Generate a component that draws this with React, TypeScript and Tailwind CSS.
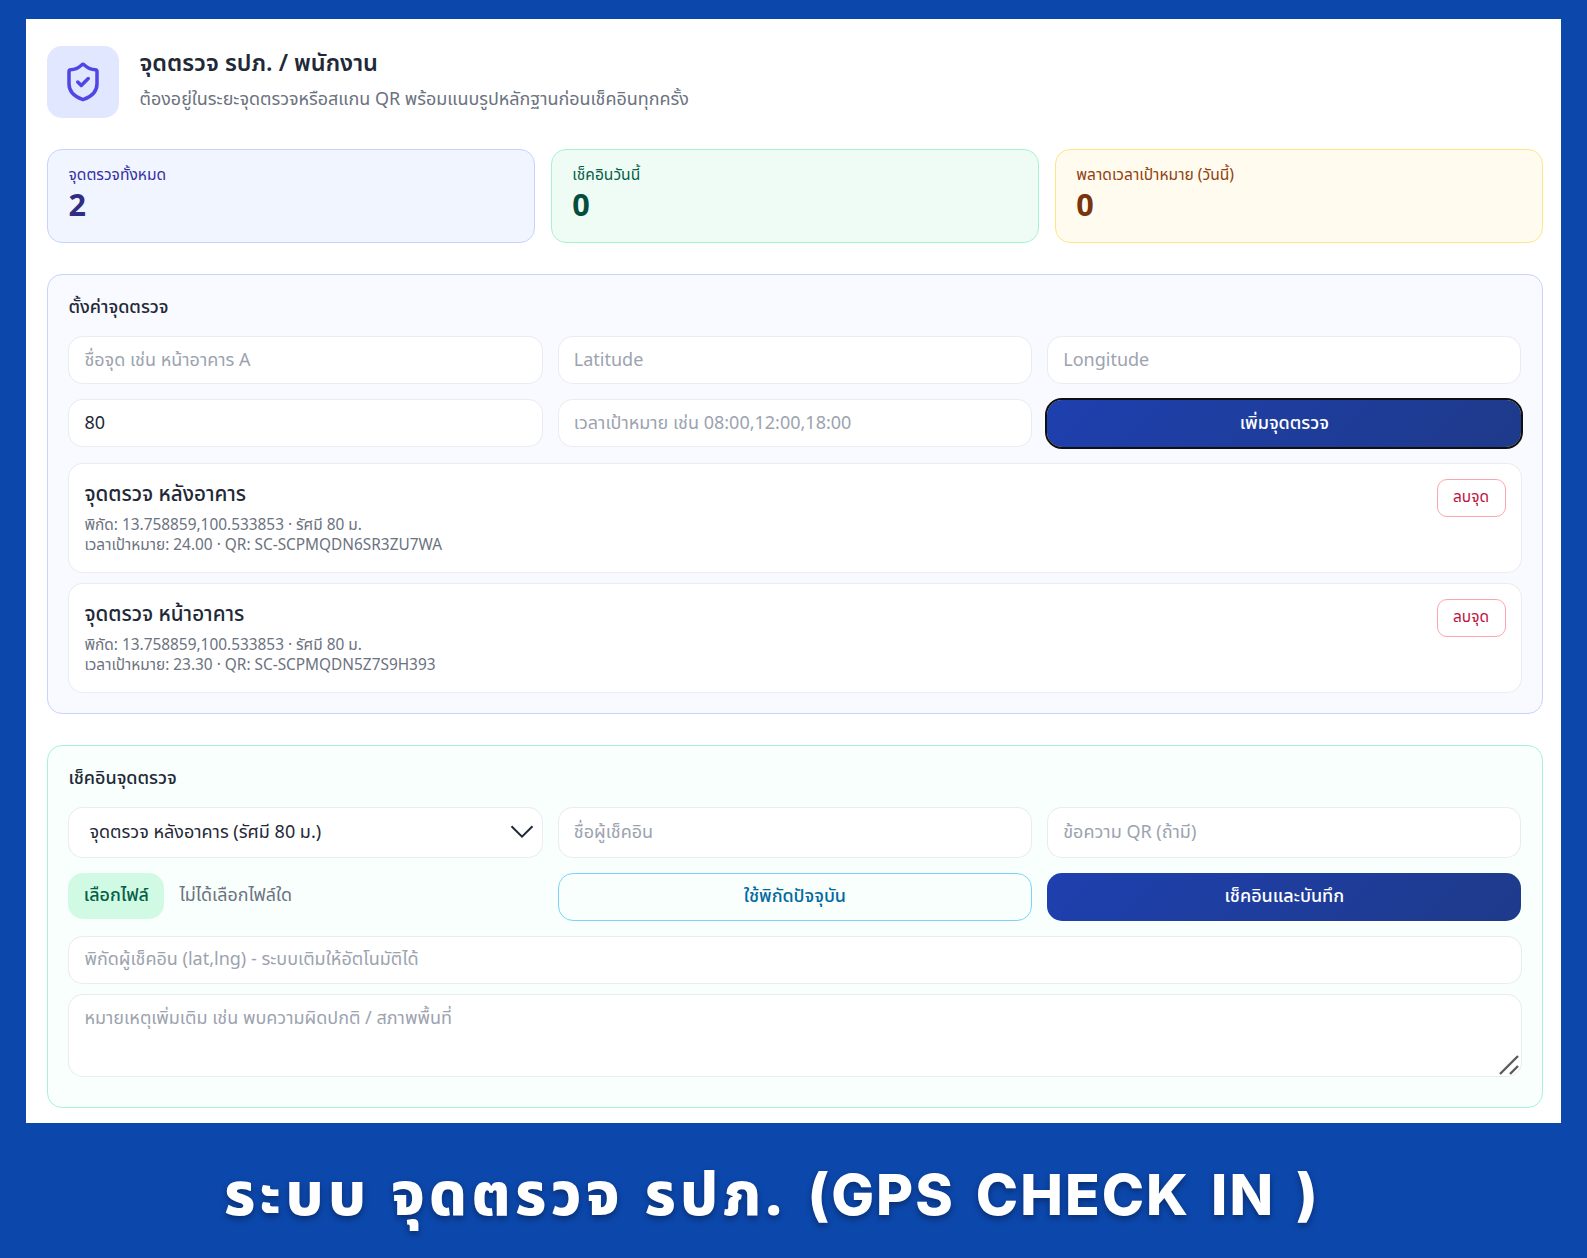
import React from "react";

const font = "font-['Noto_Sans','Noto_Sans_Thai',sans-serif]";

const field =
  "w-full min-w-0 rounded-[15px] border border-[#e5e7eb]/80 bg-white px-[15px] pb-[3px] text-[18px] text-[#1f2937] placeholder:text-[#9ca3af] placeholder:opacity-100 outline-none";

const primary =
  "rounded-[15px] bg-[linear-gradient(135deg,#1e40af,#1e3a8a)] pb-[2px] text-[18px] font-medium text-white";

function Stat({ label, value, box, labelColor, valueColor }: Record<string, string>) {
  return (
    <div className={`h-[94px] rounded-[15px] border px-[20.5px] pt-[13px] ${box}`}>
      <div className={`h-[22px] text-[15.6px] leading-[22px] whitespace-nowrap ${labelColor}`}>{label}</div>
      <div className={`text-[30.6px] leading-[38px] font-bold ${valueColor}`}>{value}</div>
    </div>
  );
}

function Checkpoint({ name, place, target }: Record<string, string>) {
  return (
    <div className="flex h-[110px] items-start justify-between rounded-[15px] border border-[#e5e7eb]/80 bg-white p-[15px]">
      <div>
        <div className="h-[31px] text-[20.6px] leading-[28px] font-medium text-[#1f2937]">{name}</div>
        <div className="mt-[5px] text-[15.4px] leading-[20.4px] text-[#6b7280]">
          <div>{place}</div>
          <div>{target}</div>
        </div>
      </div>
      <button className="h-[38px] w-[69px] rounded-[10px] border border-[#fda4af] pb-[2px] text-[15.5px] text-[#be123c]">ลบจุด</button>
    </div>
  );
}

export default function App() {
  return (
    <div className={`h-[1258px] w-[1587px] overflow-hidden bg-[#0c47ab] pt-[19px] pl-[26px] ${font}`}>
      <main className="h-[1103.5px] w-[1535px] bg-white pt-[27px] pl-[21px]">
        <div className="w-[1496px]">
          <header className="flex h-[72px] gap-[20.5px]">
            <div className="flex size-[72px] items-center justify-center rounded-[15px] bg-[#e0e7ff]">
              <svg viewBox="0 0 24 24" className="size-[42px] text-[#4f46e5]" fill="none" stroke="currentColor" strokeWidth="2" strokeLinecap="round" strokeLinejoin="round">
                <path d="M20 13c0 5-3.5 7.5-7.66 8.95a1 1 0 0 1-.67-.01C7.5 20.5 4 18 4 13V6a1 1 0 0 1 1-1c2 0 4.5-1.2 6.24-2.72a1.17 1.17 0 0 1 1.52 0C14.51 3.81 17 5 19 5a1 1 0 0 1 1 1z" />
                <path d="m9 12 2 2 4-4" />
              </svg>
            </div>
            <div>
              <h1 className="h-[36px] text-[23.45px] leading-[33px] font-semibold whitespace-nowrap text-[#1f2937]">จุดตรวจ รปภ. / พนักงาน</h1>
              <p className="text-[17.95px] leading-[32px] whitespace-nowrap text-[#6b7280]">ต้องอยู่ในระยะจุดตรวจหรือสแกน QR พร้อมแนบรูปหลักฐานก่อนเช็คอินทุกครั้ง</p>
            </div>
          </header>

          <div className="mt-[31px] grid grid-cols-3 gap-[15.6px]">
            <Stat label="จุดตรวจทั้งหมด" value="2" box="border-[#c7d2fe] bg-[#f0f5ff]" labelColor="text-[#3730a3]" valueColor="text-[#312e81]" />
            <Stat label="เช็คอินวันนี้" value="0" box="border-[#a7f3d0] bg-[#effcf6]" labelColor="text-[#065f46]" valueColor="text-[#064e3b]" />
            <Stat label="พลาดเวลาเป้าหมาย (วันนี้)" value="0" box="border-[#fde68a] bg-[#fffbef]" labelColor="text-[#92400e]" valueColor="text-[#78350f]" />
          </div>

          <section className="mt-[31px] h-[440px] rounded-[15px] border border-[#c7d2fe] bg-[#f9faff] pt-[17px] pr-[20.5px] pl-[20.4px]">
            <h2 className="h-[44px] text-[18px] leading-[28px] font-medium text-[#1f2937]">ตั้งค่าจุดตรวจ</h2>
            <div className="grid grid-cols-3 gap-x-[15.2px] gap-y-[15px]">
              <input className={`h-[48px] ${field}`} placeholder="ชื่อจุด เช่น หน้าอาคาร A" />
              <input className={`h-[48px] ${field}`} placeholder="Latitude" />
              <input className={`h-[48px] ${field}`} placeholder="Longitude" />
              <input className={`h-[48px] ${field}`} defaultValue="80" />
              <input className={`h-[48px] ${field}`} placeholder="เวลาเป้าหมาย เช่น 08:00,12:00,18:00" />
              <button className={`mt-px h-[47px] outline-2 outline-[#101010] ${primary}`}>เพิ่มจุดตรวจ</button>
            </div>
            <div className="mt-[16px] flex flex-col gap-[10px]">
              <Checkpoint name="จุดตรวจ หลังอาคาร" place="พิกัด: 13.758859,100.533853 · รัศมี 80 ม." target="เวลาเป้าหมาย: 24.00 · QR: SC-SCPMQDN6SR3ZU7WA" />
              <Checkpoint name="จุดตรวจ หน้าอาคาร" place="พิกัด: 13.758859,100.533853 · รัศมี 80 ม." target="เวลาเป้าหมาย: 23.30 · QR: SC-SCPMQDN5Z7S9H393" />
            </div>
          </section>

          <section className="mt-[30.5px] h-[363px] rounded-[15px] border border-[#a7f3d0] bg-[#f8fffc] pt-[17px] pr-[20.5px] pl-[20.4px]">
            <h2 className="h-[44px] text-[18px] leading-[28px] font-medium text-[#1f2937]">เช็คอินจุดตรวจ</h2>
            <div className="grid grid-cols-3 gap-x-[15.2px] gap-y-[15px]">
              <button className={`flex h-[51px] items-center justify-between ${field} pt-[2px] pr-[8px] pl-[20px]`}>
                <span>จุดตรวจ หลังอาคาร (รัศมี 80 ม.)</span>
                <svg viewBox="0 0 24 14" className="h-[14px] w-[24px]" fill="none" stroke="#1f2937" strokeWidth="2">
                  <path d="M1.5 1.2 12 11.7 22.5 1.2" />
                </svg>
              </button>
              <input className={`h-[51px] ${field}`} placeholder="ชื่อผู้เช็คอิน" />
              <input className={`h-[51px] ${field}`} placeholder="ข้อความ QR (ถ้ามี)" />
              <div className="flex h-[48px] items-start gap-[15px] text-[17.9px] leading-[43px]">
                <button className="h-[46px] w-[96px] rounded-[15px] bg-[#d1fae5] pb-[3px] font-medium whitespace-nowrap text-[#065f46]">เลือกไฟล์</button>
                <span className="text-[#6b7280]">ไม่ได้เลือกไฟล์ใด</span>
              </div>
              <button className="h-[48px] rounded-[15px] border border-[#7dd3fc] pb-[2px] text-[17.9px] font-medium text-[#0369a1]">ใช้พิกัดปัจจุบัน</button>
              <button className={`h-[48px] ${primary}`}>เช็คอินและบันทึก</button>
            </div>
            <input className={`mt-[15px] block h-[48px] ${field}`} placeholder="พิกัดผู้เช็คอิน (lat,lng) - ระบบเติมให้อัตโนมัติได้" />
            <div className="relative mt-[10px]">
              <textarea className={`block h-[83px] resize-none overflow-hidden pt-[9px] leading-[26px] ${field}`} placeholder="หมายเหตุเพิ่มเติม เช่น พบความผิดปกติ / สภาพพื้นที่" />
              <svg viewBox="0 0 20 20" className="absolute right-[2.5px] bottom-[2px] size-[20px]" fill="none" stroke="#5c5c5c" strokeWidth="2.4">
                <path d="M1 19 19 1M11 19l8-8" />
              </svg>
            </div>
          </section>
        </div>
      </main>
      <footer className="pt-[19.5px] pl-[198px] text-[60px] leading-[100px] whitespace-nowrap text-white [text-shadow:0_3px_6px_rgba(0,0,0,0.35)]">
        <span className="font-['Noto_Sans','Noto_Sans_Thai',sans-serif] text-[59.5px] font-extrabold tracking-[4.3px] [word-spacing:1px]">ระบบ จุดตรวจ รปภ. </span>
        <span className="font-['Inter',sans-serif] text-[57px] font-extrabold tracking-[2px] [word-spacing:6.5px]">(GPS CHECK IN )</span>
      </footer>
    </div>
  );
}
